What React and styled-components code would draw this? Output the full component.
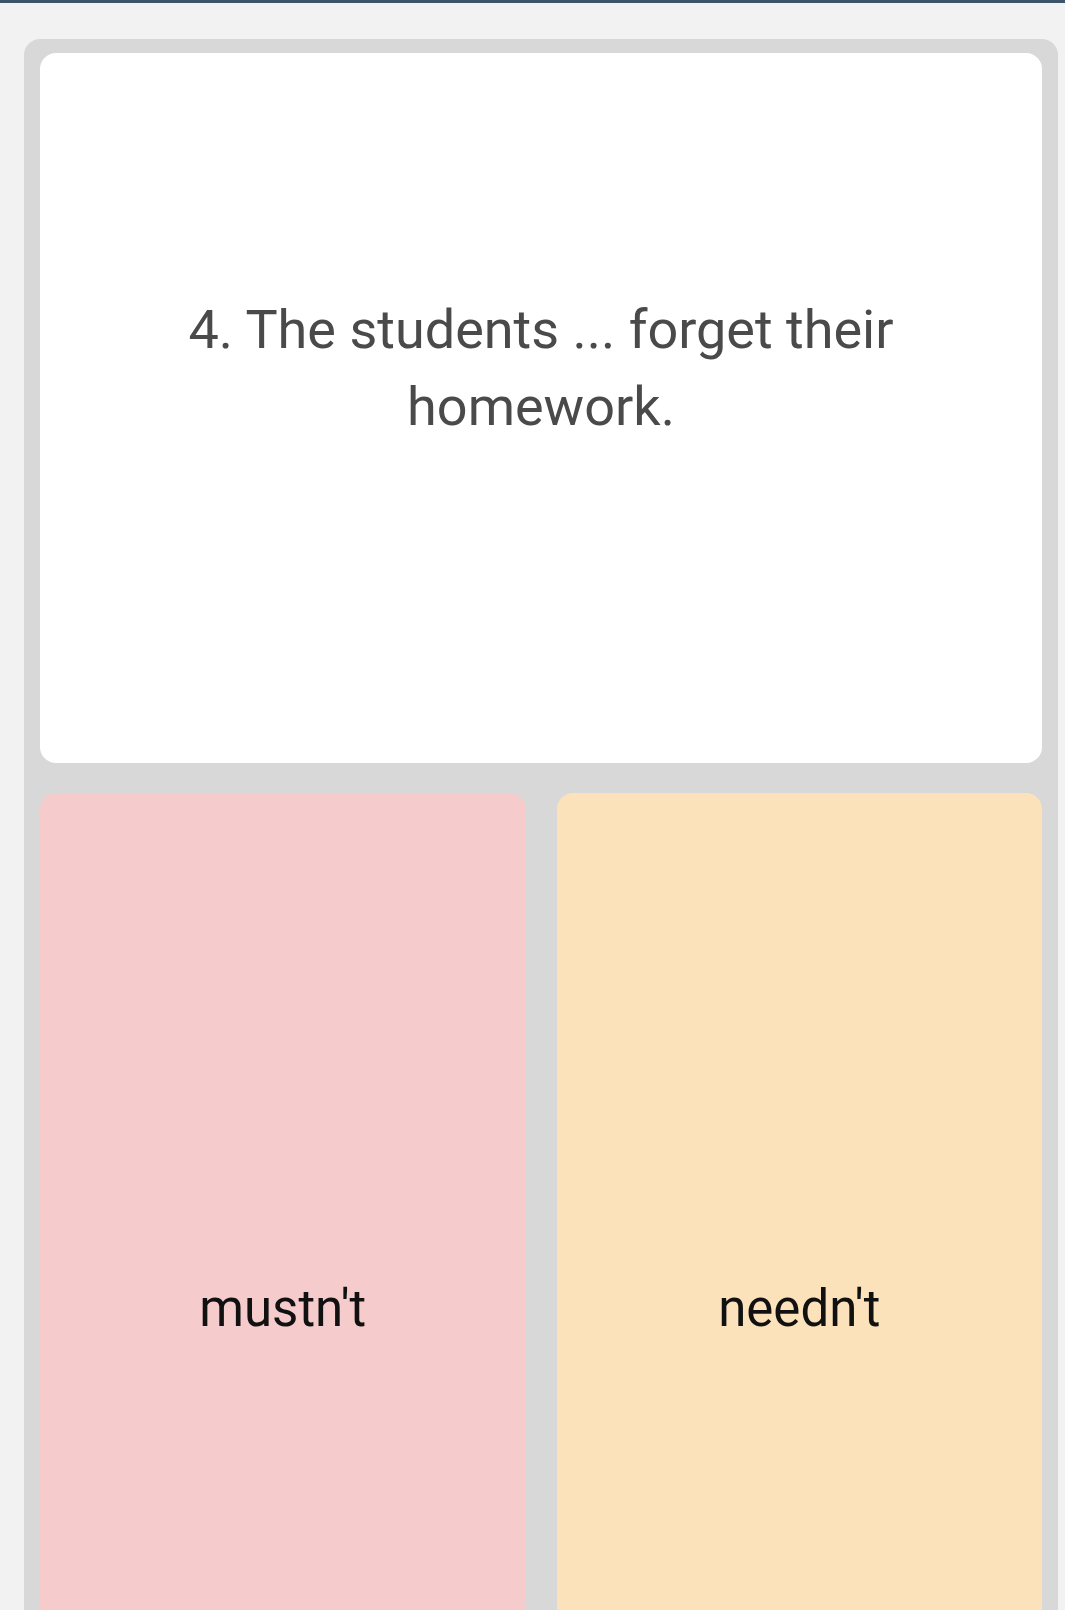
import React from 'react';
import styled, { createGlobalStyle } from 'styled-components';

const GlobalStyle = createGlobalStyle`
  html, body {
    margin: 0;
    padding: 0;
    background: #f2f2f2;
    font-family: Roboto, "Liberation Sans", sans-serif;
  }
`;

const TopBar = styled.div`
  height: 3px;
  background: #3e5468;
`;

const Page = styled.div`
  padding: 36px 7px 0 24px;
`;

const Panel = styled.div`
  background: #d8d8d8;
  border-radius: 16px 16px 0 0;
  padding: 14px 16px 0 16px;
  display: flex;
  flex-direction: column;
  gap: 30px;
`;

const QuestionCard = styled.div`
  background: #ffffff;
  border-radius: 16px;
  height: 710px;
  display: flex;
  align-items: center;
  justify-content: center;
  padding: 0 140px 80px;
  box-sizing: border-box;
`;

const Question = styled.p`
  margin: 0;
  text-align: center;
  font-size: 54px;
  line-height: 77px;
  color: #4a4a4a;
`;

const Answers = styled.div`
  display: grid;
  grid-template-columns: 1fr 1fr;
  gap: 31px;
`;

const Answer = styled.button`
  height: 1030px;
  border: none;
  border-radius: 16px 16px 0 0;
  background: ${(p) => p.$bg};
  font-family: Roboto, "Liberation Sans", sans-serif;
  font-size: 51px;
  color: #111111;
  display: flex;
  align-items: center;
  justify-content: center;
  padding: 0;
  cursor: pointer;
`;

export default function App() {
  return (
    <>
      <GlobalStyle />
      <TopBar />
      <Page>
        <Panel>
          <QuestionCard>
            <Question>4. The students ... forget their homework.</Question>
          </QuestionCard>
          <Answers>
            <Answer $bg="#f6cbcc">mustn't</Answer>
            <Answer $bg="#fbe2bb">needn't</Answer>
          </Answers>
        </Panel>
      </Page>
    </>
  );
}
